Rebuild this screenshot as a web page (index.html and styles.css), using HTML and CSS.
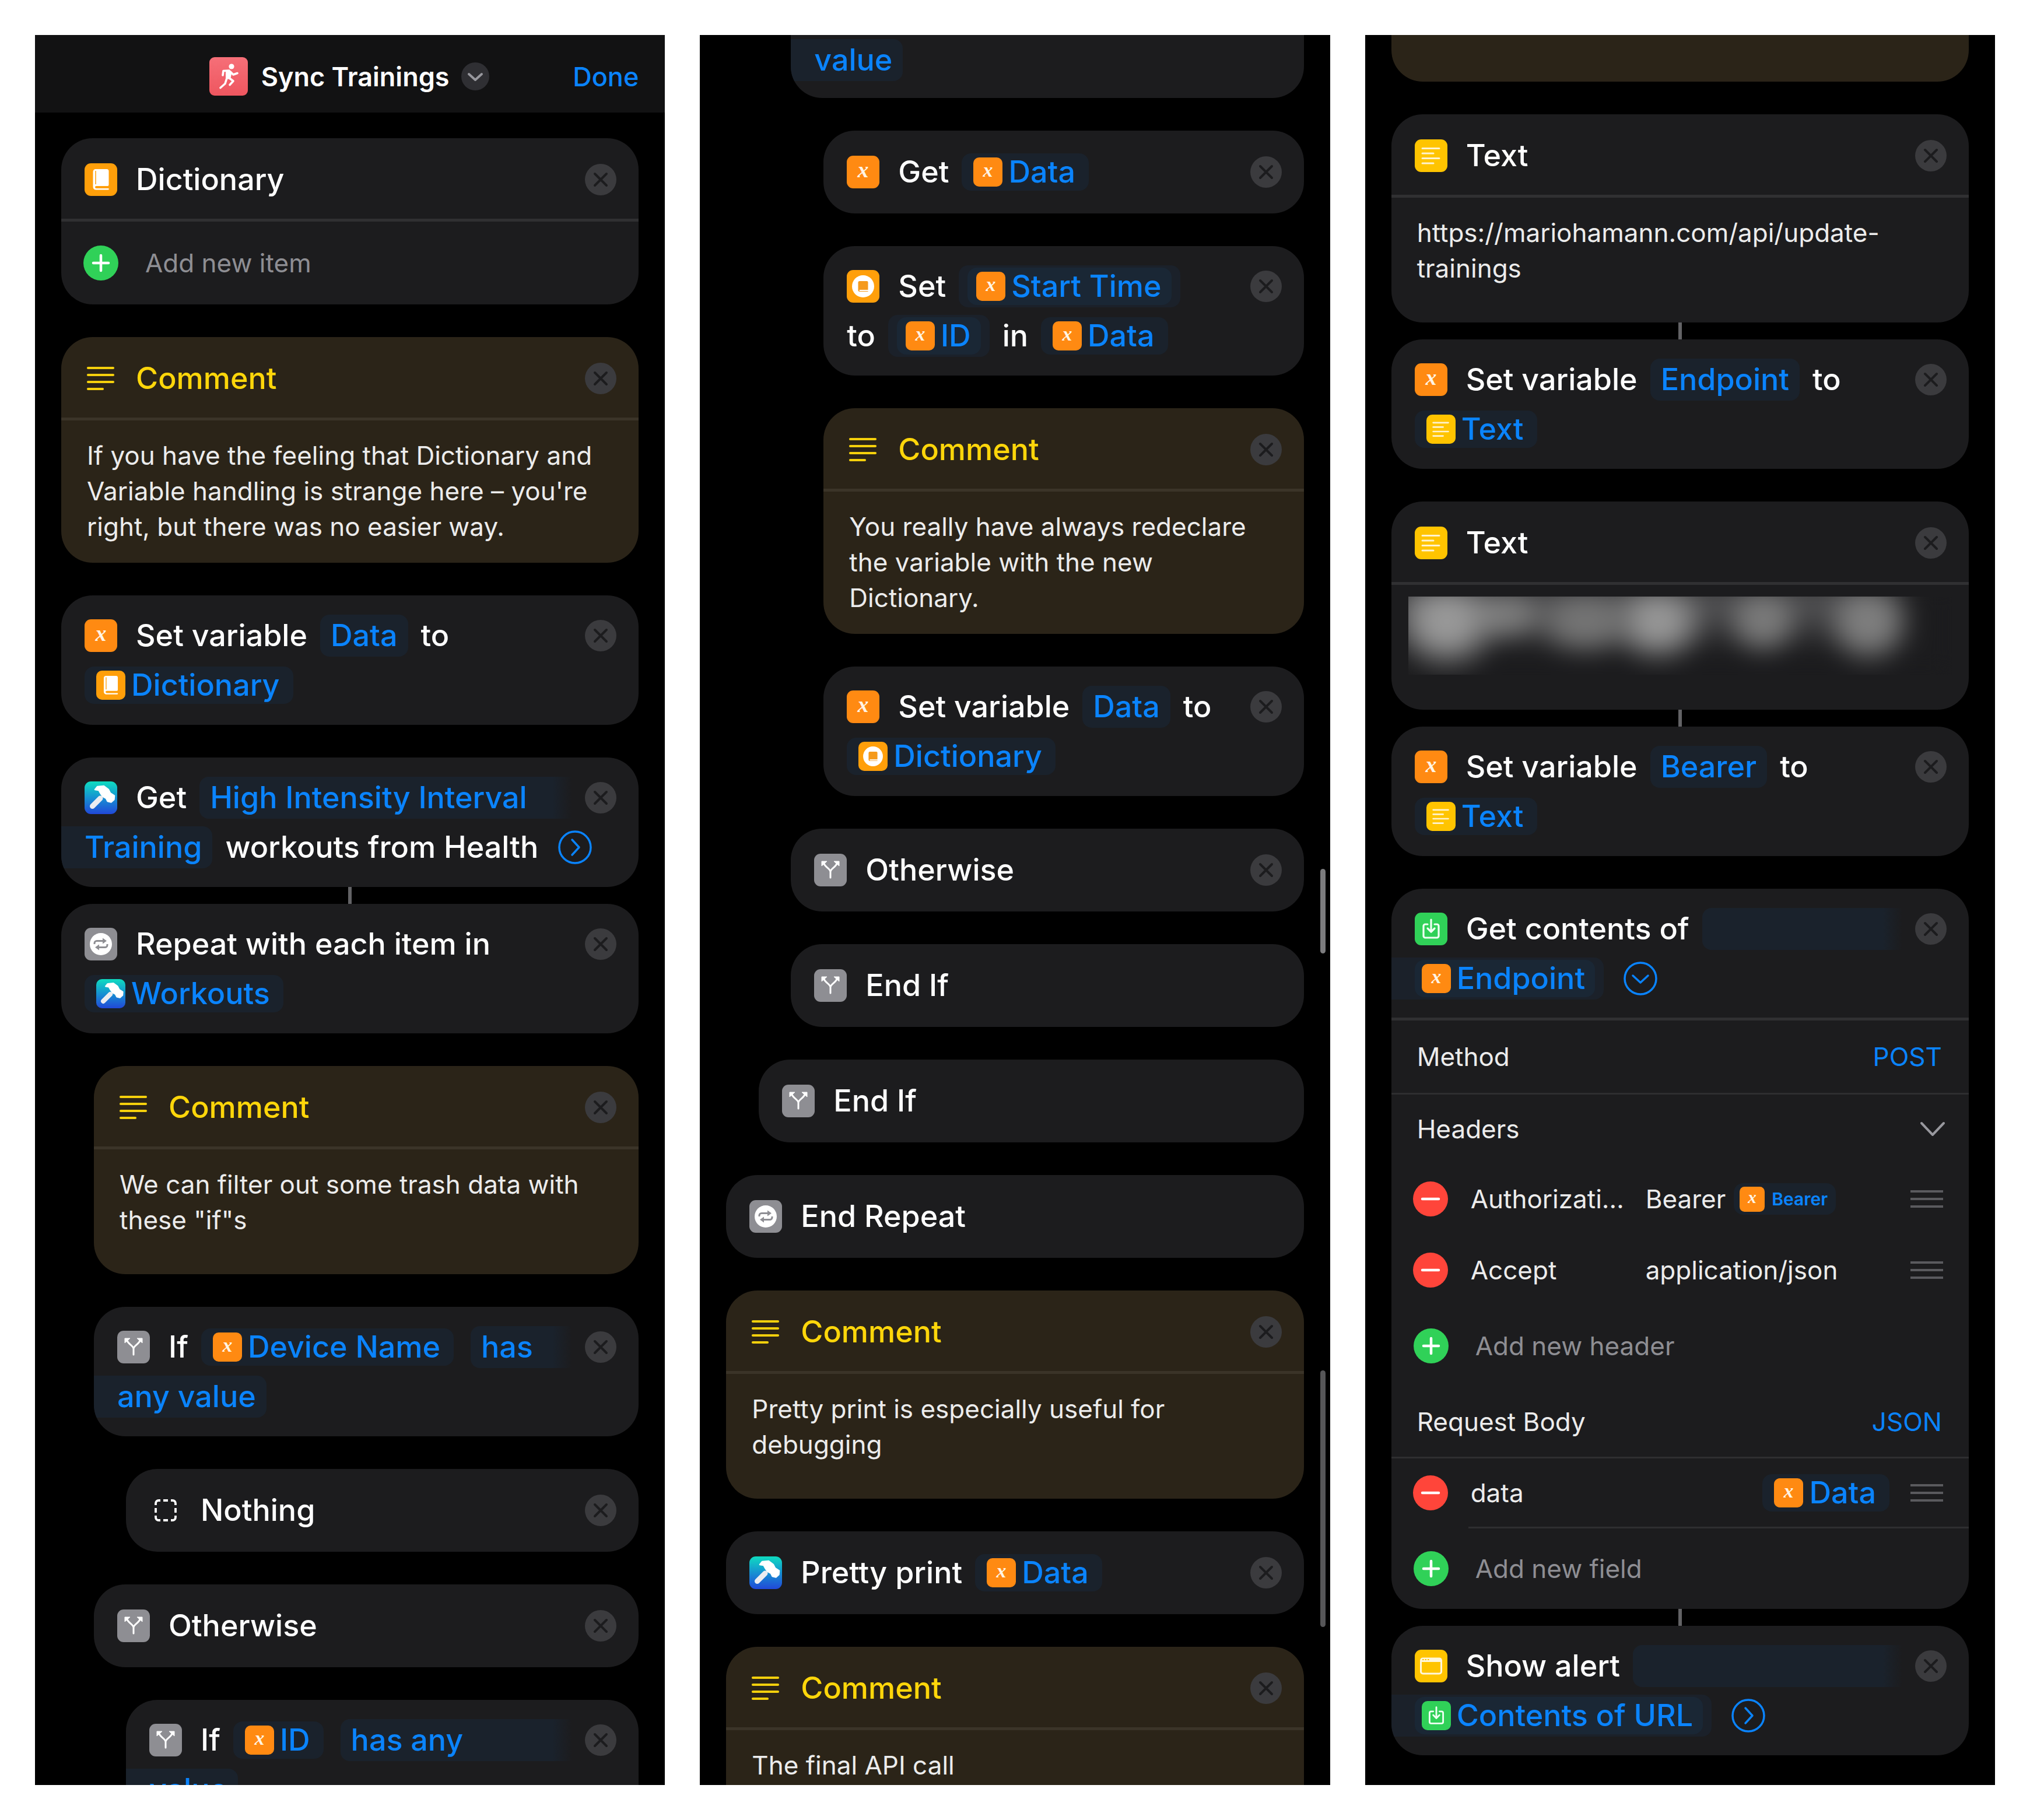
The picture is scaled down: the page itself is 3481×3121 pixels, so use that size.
FILE: index.html
```
<!DOCTYPE html>
<html lang="en">
<head>
<meta charset="utf-8">
<meta name="viewport" content="width=device-width, initial-scale=1">
<title>Sync Trainings</title>
<link rel="stylesheet" href="styles.css">
</head>
<body>
<svg class="paints" aria-hidden="true">
  <defs>
    <linearGradient id="g-hammer" x1="0" y1="0" x2="0" y2="1"><stop offset="0" stop-color="#0fdcc0"/><stop offset=".5" stop-color="#1691d2"/><stop offset="1" stop-color="#2148d8"/></linearGradient>
    <linearGradient id="g-run" x1="0" y1="0" x2="0" y2="1"><stop offset="0" stop-color="#f66f78"/><stop offset="1" stop-color="#ee565f"/></linearGradient>
  </defs>
</svg>
<svg class="sprite" aria-hidden="true">
  <symbol id="i-run" viewBox="0 0 66 66">
    <rect width="66" height="66" rx="9" fill="url(#g-run)"/>
    <circle cx="38" cy="16" r="4.6" fill="#fff"/>
    <path d="M28 22l8 1 2 6-2 9-8-1z" fill="#fff"/>
    <path d="M23 31l1-7.500 10-.5M36 25l5 5 7-2.500M33 35l8 6-6 6.500M30 36l-3 9.500-8 7" fill="none" stroke="#fff" stroke-width="3.600" stroke-linecap="round" stroke-linejoin="round"/>
  </symbol>
  <symbol id="i-x" viewBox="0 0 56 56">
    <rect width="56" height="56" rx="11" fill="#ff8a12"/>
    <text x="28" y="37" text-anchor="middle" class="glyph-x">x</text>
  </symbol>
  <symbol id="i-dict" viewBox="0 0 56 56">
    <rect width="56" height="56" rx="11" fill="#ff9f0a"/>
    <path d="M19 10h19a3.500 3.500 0 0 1 3.500 3.500V37a2 2 0 0 1-2 2H20a2 2 0 0 0 0 4h20.500a1.300 1.300 0 0 1 0 2.600H19.500a5 5 0 0 1-5-5V14.500A4.500 4.500 0 0 1 19 10z" fill="#fff"/>
    <path d="M19 13v23" stroke="#ff9f0a" stroke-width="1.500"/>
  </symbol>
  <symbol id="i-dictset" viewBox="0 0 56 56">
    <rect width="56" height="56" rx="11" fill="#ff9f0a"/>
    <circle cx="28" cy="28" r="19" fill="#fff"/>
    <path d="M22 19h12.500a2 2 0 0 1 2 2v13H22.500a1 1 0 0 0 0 2h14v1H22a2.500 2.500 0 0 1-2.500-2.500v-13A2.500 2.500 0 0 1 22 19z" fill="#f59a1c"/>
  </symbol>
  <symbol id="i-hammer" viewBox="0 0 56 56">
    <rect width="56" height="56" rx="11" fill="url(#g-hammer)"/>
    <path d="M13.500 42.500L27 29" stroke="#ececf0" stroke-width="9" stroke-linecap="round"/>
    <path d="M18 14l4-5 11-1 8 6 3 6 7 4.500-.5 6.500-5 4.500-6-1.500-2.500-5-5.500-3-4-5.500-3-5.500z" fill="#fff" stroke="#fff" stroke-width="2.500" stroke-linejoin="round"/>
  </symbol>
  <symbol id="i-repeat" viewBox="0 0 56 56">
    <rect width="56" height="56" rx="11" fill="#8e8e93"/>
    <circle cx="28" cy="28" r="19" fill="#fff"/>
    <path d="M17 28v-1.500a4 4 0 0 1 4-4h11M39 28v1.500a4 4 0 0 1-4 4H24" fill="none" stroke="#8e8e93" stroke-width="3"/>
    <path d="M31 17.500l7 5-7 5zM25 28.500l-7 5 7 5z" fill="#8e8e93"/>
  </symbol>
  <symbol id="i-branch" viewBox="0 0 56 56">
    <rect width="56" height="56" rx="11" fill="#8e8e93"/>
    <path d="M28 41V31c0-5-9-8-11-14M28 31c0-5 9-8 11-14" fill="none" stroke="#fff" stroke-width="3" stroke-linecap="round"/>
    <path d="M13 21V13h9zM43 21V13h-9z" fill="#fff" stroke="#fff" stroke-width="1" stroke-linejoin="round"/>
  </symbol>
  <symbol id="i-text" viewBox="0 0 56 56">
    <rect width="56" height="56" rx="11" fill="#ffc400"/>
    <path d="M13 15.500h29M13 24h19M13 32.500h29M13 41h19" stroke="#fff3cf" stroke-width="3" stroke-linecap="round"/>
  </symbol>
  <symbol id="i-comment" viewBox="0 0 56 56">
    <path d="M6 10h43M6 22h43M6 34h43M6 46h25" stroke="#f5d00c" stroke-width="4.200" stroke-linecap="round"/>
  </symbol>
  <symbol id="i-nothing" viewBox="0 0 56 56">
    <path d="M11 19v-3a5 5 0 0 1 5-5h3M37 11h3a5 5 0 0 1 5 5v3M45 37v3a5 5 0 0 1-5 5h-3M19 45h-3a5 5 0 0 1-5-5v-3M24 11h8M24 45h8M11 24v8M45 24v8" fill="none" stroke="#fff" stroke-width="3.800"/>
  </symbol>
  <symbol id="i-url" viewBox="0 0 56 56">
    <rect width="56" height="56" rx="11" fill="#30d158"/>
    <path d="M22 20h-4a3 3 0 0 0-3 3v17a3 3 0 0 0 3 3h20a3 3 0 0 0 3-3V23a3 3 0 0 0-3-3h-4M28 12v20M22 27l6 6 6-6" fill="none" stroke="#f0fff4" stroke-width="3.200" stroke-linecap="round" stroke-linejoin="round"/>
  </symbol>
  <symbol id="i-alert" viewBox="0 0 56 56">
    <rect width="56" height="56" rx="11" fill="#ffc400"/>
    <rect x="10.500" y="15" width="35" height="26" rx="3.500" fill="none" stroke="#fff7dd" stroke-width="3"/>
    <path d="M10 21v-4a3 3 0 0 1 3-3h30a3 3 0 0 1 3 3v4z" fill="#fff7dd"/>
    <path d="M13 17h2.500M17.500 17H20M22 17h2.500" stroke="#ffc400" stroke-width="2"/>
  </symbol>
  <symbol id="i-close" viewBox="0 0 54 54">
    <circle cx="27" cy="27" r="27" class="close-disc"/>
    <path d="M17 17l20 20M37 17L17 37" class="close-mark"/>
  </symbol>
  <symbol id="i-plus" viewBox="0 0 60 60">
    <circle cx="30" cy="30" r="30" fill="#30d158"/>
    <path d="M30 17v26M17 30h26" stroke="#fff" stroke-width="4.500" stroke-linecap="round"/>
  </symbol>
  <symbol id="i-minus" viewBox="0 0 60 60">
    <circle cx="30" cy="30" r="30" fill="#ff453a"/>
    <path d="M16 30h28" stroke="#fff" stroke-width="4.500" stroke-linecap="round"/>
  </symbol>
  <symbol id="i-right" viewBox="0 0 58 58">
    <circle cx="29" cy="29" r="27" fill="none" stroke="#0a84ff" stroke-width="3.500"/>
    <path d="M24 16l12 13-12 13" fill="none" stroke="#0a84ff" stroke-width="3.500" stroke-linecap="round" stroke-linejoin="round"/>
  </symbol>
  <symbol id="i-down" viewBox="0 0 58 58">
    <circle cx="29" cy="29" r="27" fill="none" stroke="#0a84ff" stroke-width="3.500"/>
    <path d="M16 24l13 12 13-12" fill="none" stroke="#0a84ff" stroke-width="3.500" stroke-linecap="round" stroke-linejoin="round"/>
  </symbol>
  <symbol id="i-menu" viewBox="0 0 48 48">
    <circle cx="24" cy="24" r="24" fill="#2f2f33"/>
    <path d="M13 20l11 10 11-10" fill="none" stroke="#98989e" stroke-width="4" stroke-linecap="round" stroke-linejoin="round"/>
  </symbol>
  <symbol id="i-chevron" viewBox="0 0 42 26">
    <path d="M2 3l19 20L40 3" fill="none" stroke="#98989e" stroke-width="4" stroke-linecap="round" stroke-linejoin="round"/>
  </symbol>
  <symbol id="i-grip" viewBox="0 0 56 32">
    <path d="M0 3h56M0 16h56M0 29h56" stroke="#5a5a5e" stroke-width="4"/>
  </symbol>
</svg>

<main class="board">
  <section class="screen">
    <header class="bar">
      <div class="bar-title">
        <svg class="app"><use href="#i-run"/></svg>
        <h1>Sync Trainings</h1>
        <button class="menu" aria-label="Shortcut options"><svg><use href="#i-menu"/></svg></button>
      </div>
      <button class="done">Done</button>
    </header>
    <div class="flow">
      <article class="card">
        <div class="head">
          <div class="line"><svg class="icon"><use href="#i-dict"/></svg><span>Dictionary</span><button class="close" aria-label="Remove"><svg><use href="#i-close"/></svg></button></div>
        </div>
        <button class="add rule"><svg><use href="#i-plus"/></svg>Add new item</button>
      </article>
      <article class="card note">
        <div class="head">
          <div class="line"><svg class="icon"><use href="#i-comment"/></svg><span>Comment</span><button class="close" aria-label="Remove"><svg><use href="#i-close"/></svg></button></div>
        </div>
        <p class="body rule">If you have the feeling that Dictionary and Variable handling is strange here – you're right, but there was no easier way.</p>
      </article>
      <article class="card">
        <div class="head">
          <div class="line"><svg class="icon"><use href="#i-x"/></svg><span>Set variable</span><button class="chip">Data</button><span>to</span><button class="close" aria-label="Remove"><svg><use href="#i-close"/></svg></button></div>
          <div class="line"><button class="chip token"><svg><use href="#i-dict"/></svg>Dictionary</button></div>
        </div>
      </article>
      <article class="card linked">
        <div class="head">
          <div class="line"><svg class="icon"><use href="#i-hammer"/></svg><span>Get</span><button class="chip opens">High Intensity Interval</button><button class="close" aria-label="Remove"><svg><use href="#i-close"/></svg></button></div>
          <div class="line"><button class="chip continues">Training</button><span>workouts from Health</span><button class="more" aria-label="Show more"><svg><use href="#i-right"/></svg></button></div>
        </div>
      </article>
      <article class="card">
        <div class="head">
          <div class="line"><svg class="icon"><use href="#i-repeat"/></svg><span>Repeat with each item in</span><button class="close" aria-label="Remove"><svg><use href="#i-close"/></svg></button></div>
          <div class="line"><button class="chip token"><svg><use href="#i-hammer"/></svg>Workouts</button></div>
        </div>
      </article>
      <article class="card note in-1">
        <div class="head">
          <div class="line"><svg class="icon"><use href="#i-comment"/></svg><span>Comment</span><button class="close" aria-label="Remove"><svg><use href="#i-close"/></svg></button></div>
        </div>
        <p class="body rule">We can filter out some trash data with these "if"s</p>
      </article>
      <article class="card in-1">
        <div class="head">
          <div class="line"><svg class="icon"><use href="#i-branch"/></svg><span>If</span><button class="chip token"><svg><use href="#i-x"/></svg>Device Name</button><button class="chip opens">has</button><button class="close" aria-label="Remove"><svg><use href="#i-close"/></svg></button></div>
          <div class="line"><button class="chip continues">any value</button></div>
        </div>
      </article>
      <article class="card in-2">
        <div class="head">
          <div class="line"><svg class="icon"><use href="#i-nothing"/></svg><span>Nothing</span><button class="close" aria-label="Remove"><svg><use href="#i-close"/></svg></button></div>
        </div>
      </article>
      <article class="card in-1">
        <div class="head">
          <div class="line"><svg class="icon"><use href="#i-branch"/></svg><span>Otherwise</span><button class="close" aria-label="Remove"><svg><use href="#i-close"/></svg></button></div>
        </div>
      </article>
      <article class="card in-2">
        <div class="head">
          <div class="line"><svg class="icon"><use href="#i-branch"/></svg><span>If</span><button class="chip token"><svg><use href="#i-x"/></svg>ID</button><button class="chip opens">has any</button><button class="close" aria-label="Remove"><svg><use href="#i-close"/></svg></button></div>
          <div class="line"><button class="chip continues">value</button></div>
        </div>
      </article>
    </div>
  </section>

  <section class="screen">
    <div class="flow scrolled">
      <article class="card in-2 cut">
        <div class="head">
          <div class="line"><button class="chip continues">value</button></div>
        </div>
      </article>
      <article class="card in-3">
        <div class="head">
          <div class="line"><svg class="icon"><use href="#i-x"/></svg><span>Get</span><button class="chip token"><svg><use href="#i-x"/></svg>Data</button><button class="close" aria-label="Remove"><svg><use href="#i-close"/></svg></button></div>
        </div>
      </article>
      <article class="card in-3">
        <div class="head">
          <div class="line"><svg class="icon"><use href="#i-dictset"/></svg><span>Set</span><span class="slot"><button class="chip token"><svg><use href="#i-x"/></svg>Start Time</button></span><button class="close" aria-label="Remove"><svg><use href="#i-close"/></svg></button></div>
          <div class="line"><span>to</span><span class="slot"><button class="chip token"><svg><use href="#i-x"/></svg>ID</button></span><span>in</span><button class="chip token"><svg><use href="#i-x"/></svg>Data</button></div>
        </div>
      </article>
      <article class="card note in-3">
        <div class="head">
          <div class="line"><svg class="icon"><use href="#i-comment"/></svg><span>Comment</span><button class="close" aria-label="Remove"><svg><use href="#i-close"/></svg></button></div>
        </div>
        <p class="body rule">You really have always redeclare the variable with the new Dictionary.</p>
      </article>
      <article class="card in-3">
        <div class="head">
          <div class="line"><svg class="icon"><use href="#i-x"/></svg><span>Set variable</span><button class="chip">Data</button><span>to</span><button class="close" aria-label="Remove"><svg><use href="#i-close"/></svg></button></div>
          <div class="line"><button class="chip token"><svg><use href="#i-dictset"/></svg>Dictionary</button></div>
        </div>
      </article>
      <article class="card in-2">
        <div class="head">
          <div class="line"><svg class="icon"><use href="#i-branch"/></svg><span>Otherwise</span><button class="close" aria-label="Remove"><svg><use href="#i-close"/></svg></button></div>
        </div>
      </article>
      <article class="card in-2">
        <div class="head">
          <div class="line"><svg class="icon"><use href="#i-branch"/></svg><span>End If</span></div>
        </div>
      </article>
      <article class="card in-1">
        <div class="head">
          <div class="line"><svg class="icon"><use href="#i-branch"/></svg><span>End If</span></div>
        </div>
      </article>
      <article class="card">
        <div class="head">
          <div class="line"><svg class="icon"><use href="#i-repeat"/></svg><span>End Repeat</span></div>
        </div>
      </article>
      <article class="card note">
        <div class="head">
          <div class="line"><svg class="icon"><use href="#i-comment"/></svg><span>Comment</span><button class="close" aria-label="Remove"><svg><use href="#i-close"/></svg></button></div>
        </div>
        <p class="body rule">Pretty print is especially useful for debugging</p>
      </article>
      <article class="card">
        <div class="head">
          <div class="line"><svg class="icon"><use href="#i-hammer"/></svg><span>Pretty print</span><button class="chip token"><svg><use href="#i-x"/></svg>Data</button><button class="close" aria-label="Remove"><svg><use href="#i-close"/></svg></button></div>
        </div>
      </article>
      <article class="card note">
        <div class="head">
          <div class="line"><svg class="icon"><use href="#i-comment"/></svg><span>Comment</span><button class="close" aria-label="Remove"><svg><use href="#i-close"/></svg></button></div>
        </div>
        <p class="body rule">The final API call</p>
      </article>
    </div>
    <div class="thumb thumb-upper"></div>
    <div class="thumb thumb-lower"></div>
  </section>

  <section class="screen">
    <div class="flow scrolled">
      <article class="card note cut tail"></article>
      <article class="card linked">
        <div class="head">
          <div class="line"><svg class="icon"><use href="#i-text"/></svg><span>Text</span><button class="close" aria-label="Remove"><svg><use href="#i-close"/></svg></button></div>
        </div>
        <p class="body rule">https://mariohamann.com/api/update-trainings</p>
      </article>
      <article class="card">
        <div class="head">
          <div class="line"><svg class="icon"><use href="#i-x"/></svg><span>Set variable</span><button class="chip">Endpoint</button><span>to</span><button class="close" aria-label="Remove"><svg><use href="#i-close"/></svg></button></div>
          <div class="line"><button class="chip token"><svg><use href="#i-text"/></svg>Text</button></div>
        </div>
      </article>
      <article class="card linked">
        <div class="head">
          <div class="line"><svg class="icon"><use href="#i-text"/></svg><span>Text</span><button class="close" aria-label="Remove"><svg><use href="#i-close"/></svg></button></div>
        </div>
        <div class="secret rule"><div class="smear"></div></div>
      </article>
      <article class="card">
        <div class="head">
          <div class="line"><svg class="icon"><use href="#i-x"/></svg><span>Set variable</span><button class="chip">Bearer</button><span>to</span><button class="close" aria-label="Remove"><svg><use href="#i-close"/></svg></button></div>
          <div class="line"><button class="chip token"><svg><use href="#i-text"/></svg>Text</button></div>
        </div>
      </article>
      <article class="card linked">
        <div class="head">
          <div class="line"><svg class="icon"><use href="#i-url"/></svg><span>Get contents of</span><button class="chip opens" aria-label="URL"></button><button class="close" aria-label="Remove"><svg><use href="#i-close"/></svg></button></div>
          <div class="line"><span class="slot continues"><button class="chip token"><svg><use href="#i-x"/></svg>Endpoint</button></span><button class="more" aria-label="Show less"><svg><use href="#i-down"/></svg></button></div>
        </div>
        <div class="row rule"><span>Method</span><button class="pick">POST</button></div>
        <div class="row hair"><span>Headers</span><button class="fold" aria-label="Collapse headers"><svg><use href="#i-chevron"/></svg></button></div>
        <div class="field">
          <button class="minus" aria-label="Delete header"><svg><use href="#i-minus"/></svg></button>
          <input class="key" aria-label="Header name" value="Authorization">
          <span class="value">Bearer <button class="chip mini"><svg><use href="#i-x"/></svg>Bearer</button></span>
          <svg class="grip"><use href="#i-grip"/></svg>
        </div>
        <div class="field">
          <button class="minus" aria-label="Delete header"><svg><use href="#i-minus"/></svg></button>
          <input class="key" aria-label="Header name" value="Accept">
          <input class="value" aria-label="Header value" value="application/json">
          <svg class="grip"><use href="#i-grip"/></svg>
        </div>
        <button class="add"><svg><use href="#i-plus"/></svg>Add new header</button>
        <div class="row"><span>Request Body</span><button class="pick">JSON</button></div>
        <div class="field hair">
          <button class="minus" aria-label="Delete field"><svg><use href="#i-minus"/></svg></button>
          <input class="key" aria-label="Field name" value="data">
          <span class="value end"><button class="chip token"><svg><use href="#i-x"/></svg>Data</button></span>
          <svg class="grip"><use href="#i-grip"/></svg>
        </div>
        <div class="inset"></div>
        <button class="add"><svg><use href="#i-plus"/></svg>Add new field</button>
      </article>
      <article class="card">
        <div class="head">
          <div class="line"><svg class="icon"><use href="#i-alert"/></svg><span>Show alert</span><button class="chip opens" aria-label="Alert text"></button><button class="close" aria-label="Remove"><svg><use href="#i-close"/></svg></button></div>
          <div class="line"><span class="slot continues"><button class="chip token"><svg><use href="#i-url"/></svg>Contents of URL</button></span><button class="more" aria-label="Show more"><svg><use href="#i-right"/></svg></button></div>
        </div>
      </article>
    </div>
  </section>
</main>
</body>
</html>
```
FILE: styles.css
```
:root {
  --blue: #0a84ff;
  --card: #1c1c1e;
  --note: #2b2418;
  --chip: #1a222c;
}

* { box-sizing: border-box; }

body {
  margin: 0;
  background: #fff;
  color: #fff;
  font-family: Inter, Roboto, "Liberation Sans", sans-serif;
}

button, input {
  margin: 0;
  padding: 0;
  border: 0;
  background: none;
  color: inherit;
  font: inherit;
}

button {
  cursor: pointer;
  flex: none;
}

svg { display: block; }

.sprite { display: none; }

.paints {
  position: absolute;
  width: 0;
  height: 0;
}

.glyph-x {
  font: italic bold 38px "Liberation Serif", serif;
  fill: #fff4e4;
}

.board {
  display: grid;
  grid-template-columns: repeat(3, minmax(0, 1fr));
  gap: 60px;
  height: 100vh;
  padding: 60px;
}

.screen {
  position: relative;
  overflow: hidden;
  background: #000;
}

/* title bar */
.bar {
  display: grid;
  grid-template-columns: 1fr auto 1fr;
  align-items: center;
  height: 133px;
  padding: 9px 45px 0;
  background: #121213;
  font-size: 45px;
}

.bar-title {
  display: flex;
  grid-column: 2;
  align-items: center;
}

.app {
  width: 66px;
  height: 66px;
  margin-right: 23px;
}

h1 {
  margin: 0;
  font-size: 45px;
  font-weight: 600;
}

.menu {
  margin-left: 20px;
  margin-right: 3px;
}

.menu svg {
  width: 48px;
  height: 48px;
}

.done {
  justify-self: end;
  color: var(--blue);
  font-weight: 500;
}

/* list of actions */
.flow {
  display: flex;
  flex-direction: column;
  gap: 56px;
  padding: 44px 45px;
}

.flow.scrolled { padding-top: 0; }

.card {
  position: relative;
  flex: none;
  border-radius: 54px;
  background: var(--card);
}

.in-1 { margin-left: 56px; }
.in-2 { margin-left: 111px; }
.in-3 { margin-left: 167px; }

.tail { height: 80px; }

.linked { margin-bottom: -27px; }

.linked::after {
  content: "";
  position: absolute;
  top: 100%;
  left: 50%;
  width: 6px;
  height: 29px;
  margin-left: -3px;
  background: #636366;
}

.note { background: var(--note); }

.note .head { color: #ffd60a; }

.head {
  overflow: hidden;
  padding: 26px 38px 26px 40px;
  border-radius: 54px;
  font-size: 52px;
  font-weight: 450;
  white-space: nowrap;
}

.head:has(> .line:only-child) { padding: 28px 38px 29px 40px; }

.flow .card .head:has(+ .rule) {
  padding-bottom: 25px;
  border-radius: 54px 54px 0 0;
}

/* first card of a scrolled list runs off the top of the screen */
.card.cut, .cut .head {
  border-top-left-radius: 0;
  border-top-right-radius: 0;
}

.cut .head:has(> .line:only-child) {
  padding-top: 0;
  padding-bottom: 23px;
}

.line {
  display: flex;
  align-items: center;
  gap: 22px;
  height: 85px;
}

.icon {
  flex: none;
  width: 56px;
  height: 56px;
  margin-right: 10px;
}

.close { margin-left: auto; }

.close svg {
  width: 54px;
  height: 54px;
}

.close-disc { fill: #3b3b3e; }

.close-mark {
  fill: none;
  stroke: #1c1c1e;
  stroke-width: 4px;
  stroke-linecap: round;
}

.note .close-disc { fill: #464035; }
.note .close-mark { stroke: #2b2418; }

.more { margin-left: 12px; }

.more svg {
  width: 58px;
  height: 58px;
}

/* parameter chips */
.chip {
  height: 72px;
  padding: 0 18px;
  border-radius: 16px;
  background: var(--chip);
  color: var(--blue);
  font-weight: 450;
}

.token {
  display: flex;
  align-items: center;
  gap: 10px;
  height: 64px;
  padding: 0 23px 0 20px;
}

.token svg {
  width: 50px;
  height: 50px;
}

.token + .chip { margin-left: 7px; }

.opens {
  flex: 1;
  border-radius: 16px 0 0 16px;
  background: linear-gradient(to right, var(--chip) calc(100% - 34px), var(--card));
  text-align: left;
}

.continues {
  margin-left: -40px;
  padding-left: 40px;
  border-radius: 0 16px 16px 0;
}

.slot {
  display: flex;
  align-items: center;
  height: 72px;
  padding: 0 15px;
  border-radius: 16px;
  background: #1b212a;
}

.slot .chip {
  padding: 0 17px 0 15px;
  background: #1a2735;
}

.slot.continues {
  padding-left: 40px;
  border-radius: 0 16px 16px 0;
}

.slot.continues .chip { padding-left: 12px; }

/* card bodies */
.rule { border-top: 5px solid #303032; }
.note .rule { border-color: #3b3428; }
.hair { border-top: 3px solid #2e2e30; }

.body {
  min-height: 219px;
  margin: 0;
  padding: 30px 44px 31px;
  color: #ececec;
  font-size: 44px;
  line-height: 61px;
}

.add {
  display: flex;
  align-items: center;
  gap: 46px;
  width: 100%;
  height: 138px;
  padding: 0 38px;
  color: #8e8e93;
  font-size: 44px;
}

.add.rule { height: 147px; }

.add svg {
  width: 60px;
  height: 60px;
}

.secret {
  height: 219px;
  padding: 20px 29px;
}

/* blurred-out token */
.smear {
  position: relative;
  overflow: hidden;
  height: 134px;
}

.smear::before {
  content: "";
  position: absolute;
  inset: -20px 0 0 -20px;
  background:
    radial-gradient(100px 90px at 9% 42%, #989898 35%, transparent 100%),
    radial-gradient(70px 50px at 20% 34%, #7a7a7a 40%, transparent 100%),
    radial-gradient(100px 64px at 34% 42%, #747474 40%, transparent 100%),
    radial-gradient(90px 76px at 47% 42%, #969696 35%, transparent 100%),
    radial-gradient(70px 66px at 66% 40%, #7a7a7a 40%, transparent 100%),
    radial-gradient(80px 78px at 85% 42%, #7e7e7e 40%, transparent 100%),
    linear-gradient(to right, transparent 84%, var(--card) 94%),
    linear-gradient(#4c4c4e 30%, var(--card) 75%);
  filter: blur(18px);
}

.row {
  display: flex;
  align-items: center;
  justify-content: space-between;
  height: 121px;
  padding: 0 46px 0 44px;
  color: #ececec;
  font-size: 44px;
}

.row.rule { height: 129px; }

.pick { color: var(--blue); }

.fold { margin-right: -5px; }

.fold svg {
  width: 42px;
  height: 26px;
}

.field {
  display: flex;
  align-items: center;
  height: 122px;
  padding: 0 44px 0 37px;
  color: #ececec;
  font-size: 44px;
}

.field.hair { height: 120px; }

.minus { margin-right: 39px; }

.minus svg {
  width: 60px;
  height: 60px;
}

.key {
  width: 266px;
  margin-right: 34px;
  text-overflow: ellipsis;
}

.value {
  display: flex;
  flex: 1;
  align-items: center;
  gap: 14px;
  min-width: 0;
}

.value.end {
  justify-content: flex-end;
  font-size: 52px;
}

.mini {
  display: flex;
  align-items: center;
  gap: 12px;
  height: 54px;
  padding: 0 14px 0 10px;
  font-size: 30px;
  font-weight: 600;
}

.mini svg {
  width: 43px;
  height: 43px;
}

.grip {
  flex: none;
  width: 56px;
  height: 32px;
  margin-left: 36px;
}

.inset {
  height: 3px;
  margin-left: 132px;
  background: #2e2e30;
}

/* scroll indicators lie over the list */
.thumb {
  position: absolute;
  right: 8px;
  width: 9px;
  border-radius: 5px;
}

.thumb-upper {
  top: 1430px;
  height: 145px;
  background: #7c7c7e;
}

.thumb-lower {
  top: 2290px;
  height: 440px;
  background: #565658;
}
```
